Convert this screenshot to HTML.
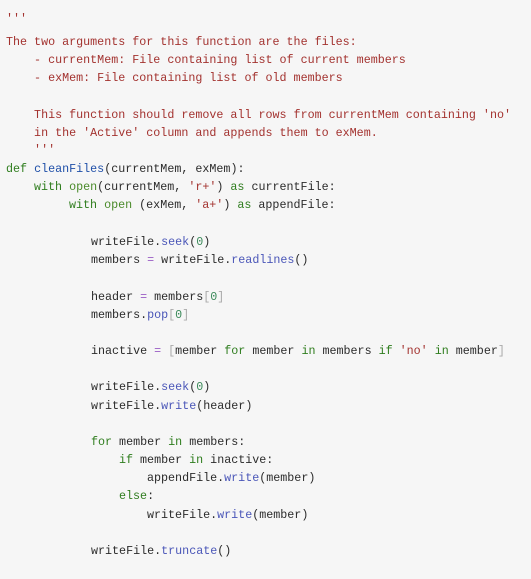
<!DOCTYPE html>
<html><head><meta charset="utf-8"><style>
html,body{margin:0;padding:0;background:#f6f6f6;width:531px;height:579px;overflow:hidden}
.l{position:absolute;white-space:pre;font-family:"Liberation Mono",monospace;font-size:11.7px;color:#2b2b2b;line-height:14px}
.s{color:#a3322f}.k{color:#2f7d1e}.b{color:#1f4fa8}.m{color:#4a56b8}.g{color:#aaa}.n{color:#3b8a5a}.o{color:#9a5cc4}.bi{color:#4b8b2b}
</style></head><body>
<div class="l s" style="left:6px;top:12px">'''</div>
<div class="l s" style="left:6px;top:35px">The two arguments for this function are the files:</div>
<div class="l s" style="left:6px;top:53px">    - currentMem: File containing list of current members</div>
<div class="l s" style="left:6px;top:71px">    - exMem: File containing list of old members</div>
<div class="l s" style="left:6px;top:108px">    This function should remove all rows from currentMem containing 'no'</div>
<div class="l s" style="left:6px;top:126px">    in the 'Active' column and appends them to exMem.</div>
<div class="l s" style="left:6px;top:143px">    '''</div>
<div class="l" style="left:6px;top:162px"><span class="k">def</span> <span class="b">cleanFiles</span>(currentMem, exMem):</div>
<div class="l" style="left:34px;top:180px"><span class="k">with</span> <span class="bi">open</span>(currentMem, <span class="s">'r+'</span>) <span class="k">as</span> currentFile:</div>
<div class="l" style="left:69px;top:198px"><span class="k">with</span> <span class="bi">open</span> (exMem, <span class="s">'a+'</span>) <span class="k">as</span> appendFile:</div>
<div class="l" style="left:91px;top:235px">writeFile.<span class="m">seek</span>(<span class="n">0</span>)</div>
<div class="l" style="left:91px;top:253px">members <span class="o">=</span> writeFile.<span class="m">readlines</span>()</div>
<div class="l" style="left:91px;top:290px">header <span class="o">=</span> members<span class="g">[</span><span class="n">0</span><span class="g">]</span></div>
<div class="l" style="left:91px;top:308px">members.<span class="m">pop</span><span class="g">[</span><span class="n">0</span><span class="g">]</span></div>
<div class="l" style="left:91px;top:344px">inactive <span class="o">=</span> <span class="g">[</span>member <span class="k">for</span> member <span class="k">in</span> members <span class="k">if</span> <span class="s">'no'</span> <span class="k">in</span> member<span class="g">]</span></div>
<div class="l" style="left:91px;top:380px">writeFile.<span class="m">seek</span>(<span class="n">0</span>)</div>
<div class="l" style="left:91px;top:399px">writeFile.<span class="m">write</span>(header)</div>
<div class="l" style="left:91px;top:435px"><span class="k">for</span> member <span class="k">in</span> members:</div>
<div class="l" style="left:119px;top:453px"><span class="k">if</span> member <span class="k">in</span> inactive:</div>
<div class="l" style="left:147px;top:471px">appendFile.<span class="m">write</span>(member)</div>
<div class="l" style="left:119px;top:489px"><span class="k">else</span>:</div>
<div class="l" style="left:147px;top:508px">writeFile.<span class="m">write</span>(member)</div>
<div class="l" style="left:91px;top:544px">writeFile.<span class="m">truncate</span>()</div>
</body></html>
